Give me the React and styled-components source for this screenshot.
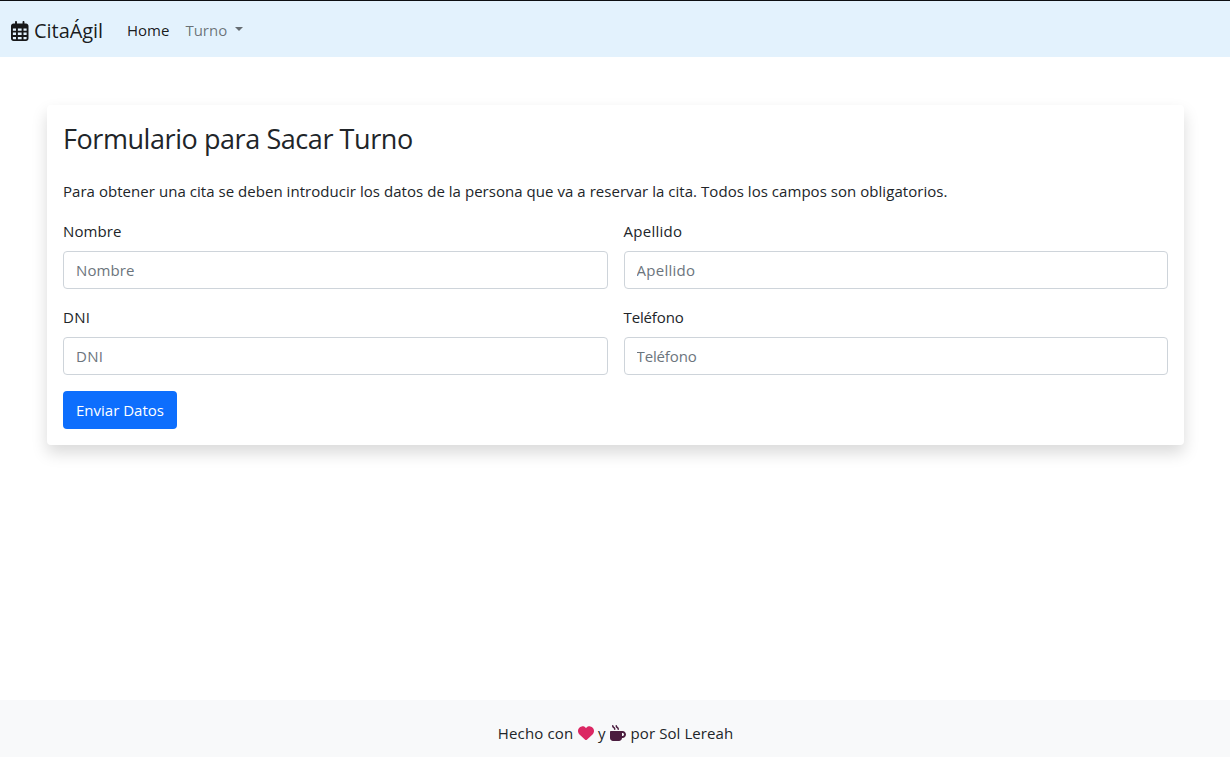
import React from "react";
import styled, { createGlobalStyle } from "styled-components";
import { FaRegCalendarDays, FaHeart, FaMugHot } from "react-icons/fa6";

const GlobalStyle = createGlobalStyle`
  *, *::before, *::after { box-sizing: border-box; }
  body {
    margin: 0;
    background: #fff;
    color: #212529;
    font-family: "Segoe UI", "Open Sans", "Noto Sans", sans-serif;
    font-size: 15px;
    line-height: 24px;
  }
`;

const Page = styled.div`
  display: flex;
  flex-direction: column;
  height: 757px;
  overflow: hidden;
`;

const Navbar = styled.nav`
  display: flex;
  align-items: center;
  height: 57px;
  padding: 2px 0 0 11px;
  border-top: 1px solid #0d0f12;
  background: #e3f2fd;
`;

const Brand = styled.a`
  display: flex;
  align-items: center;
  gap: 5.5px;
  margin-right: 24px;
  padding-top: 2px;
  width: 92px;
  color: rgba(0, 0, 0, 0.9);
  font-size: 20px;
  line-height: 30px;
  white-space: nowrap;
  svg { flex: none; width: 17.5px; height: 20px; }
`;

const Spaced = styled.span`
  letter-spacing: ${(p) => p.$track || 0}px;
  white-space: nowrap;
`;

const NavLink = styled.a`
  display: flex;
  align-items: center;
  margin-right: 16px;
  color: ${(p) => (p.$active ? "rgba(0,0,0,.9)" : "rgba(0,0,0,.55)")};
`;

const Caret = styled.i`
  margin: -3px 0 0 8px;
  border: 4.5px solid transparent;
  border-top-color: currentColor;
  border-bottom: 0;
`;

const Main = styled.main`
  flex: 1;
  padding: 48px 46px 0 47px;
`;

const Card = styled.section`
  height: 340px;
  padding: 16px;
  border-radius: 4px;
  background: #fff;
  box-shadow: 0 8px 16px rgba(0, 0, 0, 0.15);
`;

const Title = styled.h1`
  margin: 0 0 24px;
  padding-top: 1px;
  height: 34px;
  font-size: 27px;
  font-weight: 400;
  line-height: 34px;
`;

const Intro = styled.p`
  margin: 0 0 16px;
`;

const Grid = styled.form`
  display: grid;
  grid-template-columns: 1fr 1fr;
  gap: 16px;
`;

const Field = styled.label`
  display: flex;
  flex-direction: column;
  gap: 8px;
`;

const Input = styled.input`
  width: 100%;
  height: 38px;
  padding: 6px 12px;
  border: 1px solid #ced4da;
  border-radius: 4px;
  background: #fff;
  font: inherit;
  letter-spacing: ${(p) => p.$track || 0}px;
  &::placeholder { color: #6c757d; opacity: 1; }
`;

const Submit = styled.button`
  justify-self: start;
  width: 114px;
  height: 38px;
  padding: 0;
  border: 0;
  border-radius: 4px;
  background: #0d6efd;
  color: #fff;
  font: inherit;
`;

const Footer = styled.footer`
  display: flex;
  justify-content: center;
  gap: 4.3px;
  height: 57px;
  padding: 21px 0 0 1px;
  background: #f8f9fa;
  svg { flex: none; width: 16px; height: 16px; margin-top: 4px; }
`;

const fields = [
  { name: "Nombre", track: 0.12 },
  { name: "Apellido", track: 0.28 },
  { name: "DNI", track: 0.3 },
  { name: "Teléfono", track: -0.13 },
];

export default function App() {
  return (
    <Page>
      <GlobalStyle />
      <Navbar>
        <Brand>
          <FaRegCalendarDays />
          <Spaced $track={-0.05}>CitaÁgil</Spaced>
        </Brand>
        <NavLink $active><Spaced>Home</Spaced></NavLink>
        <NavLink><Spaced>Turno</Spaced><Caret /></NavLink>
      </Navbar>
      <Main>
        <Card>
          <Title><Spaced $track={-0.43}>Formulario para Sacar Turno</Spaced></Title>
          <Intro>
            <Spaced $track={0.043}>
              Para obtener una cita se deben introducir los datos de la persona que va a reservar la cita. Todos los campos son obligatorios.
            </Spaced>
          </Intro>
          <Grid>
            {fields.map((f) => (
              <Field key={f.name}>
                <Spaced $track={f.track}>{f.name}</Spaced>
                <Input placeholder={f.name} $track={f.track} />
              </Field>
            ))}
            <Submit type="button"><Spaced>Enviar Datos</Spaced></Submit>
          </Grid>
        </Card>
      </Main>
      <Footer>
        <Spaced $track={0.16}>Hecho con</Spaced>
        <FaHeart color="#db2763" />
        <Spaced $track={0.5}>y</Spaced>
        <FaMugHot color="#4b1d3f" />
        <Spaced $track={0.08}>por Sol Lereah</Spaced>
      </Footer>
    </Page>
  );
}
